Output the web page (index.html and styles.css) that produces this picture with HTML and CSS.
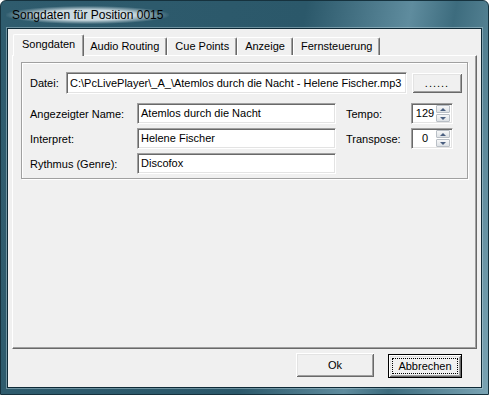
FILE: index.html
```html
<!DOCTYPE html>
<html>
<head>
    <title>Songdaten</title>
    <link rel="stylesheet" href="styles.css">
</head>
<body>

<div class="window">
    <div class="titlebar">
        <span class="title">Songdaten für Position 0015</span>
    </div>

    <div class="client">
        <div class="tabs">
            <div class="tab active">Songdaten</div>
            <div class="tab">Audio Routing</div>
            <div class="tab">Cue Points</div>
            <div class="tab">Anzeige</div>
            <div class="tab">Fernsteuerung</div>
        </div>

        <div class="panel">
            <div class="group">
                <div class="file-row">
                    <span class="label file-label">Datei:</span>
                    <div class="edit file-edit">C:\PcLivePlayer\_A_\Atemlos durch die Nacht - Helene Fischer.mp3</div>
                    <button class="btn browse">......</button>
                </div>

                <div class="fields">
                    <span class="label">Angezeigter Name:</span>
                    <div class="edit">Atemlos durch die Nacht</div>
                    <span class="label side">Tempo:</span>
                    <div class="edit spin">
                        <span class="spin-value">129</span>
                        <span class="updown">
                            <span class="arrow up"></span>
                            <span class="arrow down"></span>
                        </span>
                    </div>

                    <span class="label">Interpret:</span>
                    <div class="edit">Helene Fischer</div>
                    <span class="label side">Transpose:</span>
                    <div class="edit spin">
                        <span class="spin-value">0</span>
                        <span class="updown">
                            <span class="arrow up"></span>
                            <span class="arrow down"></span>
                        </span>
                    </div>

                    <span class="label">Rythmus (Genre):</span>
                    <div class="edit">Discofox</div>
                </div>
            </div>
        </div>

        <div class="buttons">
            <button class="btn ok">Ok</button>
            <button class="btn cancel"><span class="focus">Abbrechen</span></button>
        </div>
    </div>
</div>

</body>
</html>
```

FILE: styles.css
```css
body {
    margin: 0;
    padding: 0;
    font-family: "Liberation Sans", Arial, sans-serif;
    font-size: 11px;
    color: #000;
}

.window {
    width: 489px;
    height: 395px;
    box-sizing: border-box;
    border: 1px solid #16323e;
    border-radius: 6px 6px 0 0;
    background: linear-gradient(100deg, #2f5c6e 0%, #2b586a 55%, #5f8c9e 74%, #3d6c7e 82%, #7aa4b4 100%);
    display: flex;
    flex-direction: column;
}

.titlebar {
    height: 27px;
    padding-left: 11px;
    display: flex;
    align-items: center;
}

.title {
    font-size: 12px;
    color: #000;
    padding: 2px 6px;
    margin-left: -6px;
    background: radial-gradient(ellipse at center, rgba(230, 240, 244, 0.85) 40%, rgba(230, 240, 244, 0) 72%);
}

.client {
    margin: 0 6px 6px;
    height: 360px;
    box-sizing: border-box;
    border: 1px solid #0e2a37;
    box-shadow: 0 0 0 1px rgba(190, 215, 225, 0.45);
    background: #f0f0f0;
    padding: 5px 0 0 4px;
}

/* tab strip */
.tabs {
    display: flex;
    align-items: flex-end;
    height: 21px;
    padding-left: 2px;
    position: relative;
    z-index: 1;
}

.tab {
    height: 18px;
    line-height: 17px;
    padding: 0 7px;
    box-sizing: border-box;
    border-top: 1px solid #fff;
    border-left: 1px solid #fff;
    border-right: 1px solid #696969;
    box-shadow: inset -1px 0 #a0a0a0;
    border-radius: 2px 2px 0 0;
    background: #f0f0f0;
}

.tab.active {
    height: 22px;
    line-height: 19px;
    margin: 0 -2px -1px -1px;
    padding: 0 8px;
    position: relative;
    z-index: 2;
}

.tab.active + .tab {
    border-left-color: #f0f0f0;
}

.panel {
    width: 465px;
    height: 294px;
    box-sizing: border-box;
    border-top: 1px solid #fff;
    border-left: 1px solid #fff;
    border-right: 1px solid #696969;
    border-bottom: 1px solid #696969;
    box-shadow: inset -1px -1px #a0a0a0;
    padding: 6px 8px 0;
}

.group {
    height: 117px;
    box-sizing: border-box;
    border: 1px solid #a0a0a0;
    box-shadow: 1px 1px 0 #fff, inset 1px 1px 0 #fff;
    padding: 9px 0 0 8px;
}

.file-row {
    display: flex;
    align-items: center;
}

.file-label {
    width: 36px;
}

.edit {
    height: 21px;
    box-sizing: border-box;
    border: 1px solid;
    border-color: #a0a0a0 #fff #fff #a0a0a0;
    box-shadow: inset 1px 1px #696969, inset -1px -1px #e3e3e3;
    background: #fff;
    padding: 0 3px;
    line-height: 19px;
    white-space: nowrap;
    overflow: hidden;
}

.file-edit {
    width: 341px;
    height: 22px;
    line-height: 20px;
}

.btn {
    font-family: "Liberation Sans", Arial, sans-serif;
    font-size: 11px;
    color: #000;
    background: #f0f0f0;
    border: none;
    padding: 0;
    box-shadow: inset 1px 1px #fff, inset -1px -1px #696969, inset 2px 2px #e3e3e3, inset -2px -2px #a0a0a0;
}

.browse {
    width: 50px;
    height: 20px;
    margin-left: 5px;
    letter-spacing: 1px;
}

.fields {
    display: grid;
    grid-template-columns: 107px 199px 75px 42px;
    grid-auto-rows: 21px;
    row-gap: 4px;
    margin-top: 9px;
    align-items: center;
}

.side {
    padding-left: 10px;
}

.spin {
    display: flex;
    padding: 0 2px 0 2px;
}

.spin-value {
    flex: 1;
    text-align: center;
}

.updown {
    width: 14px;
    display: flex;
    flex-direction: column;
    gap: 1px;
    padding: 1px 0;
}

.arrow {
    flex: 1;
    box-sizing: border-box;
    border: 1px solid #b9bfc6;
    border-radius: 1px;
    background: linear-gradient(#f6f7f8, #dde1e5);
    display: flex;
    align-items: center;
    justify-content: center;
}

.arrow::after {
    content: "";
    border-left: 3px solid transparent;
    border-right: 3px solid transparent;
}

.arrow.up::after {
    border-bottom: 3px solid #4a5f80;
}

.arrow.down::after {
    border-top: 3px solid #4a5f80;
}

.buttons {
    display: flex;
    justify-content: flex-end;
    align-items: flex-start;
    gap: 14px;
    padding: 4px 19px 0 0;
}

.ok {
    width: 78px;
    height: 24px;
}

.cancel {
    width: 74px;
    height: 24px;
    margin-top: 1px;
    border: 1px solid #000;
    padding: 3px;
}

.focus {
    display: block;
    height: 100%;
    box-sizing: border-box;
    border: 1px dotted #000;
    line-height: 14px;
}
```
